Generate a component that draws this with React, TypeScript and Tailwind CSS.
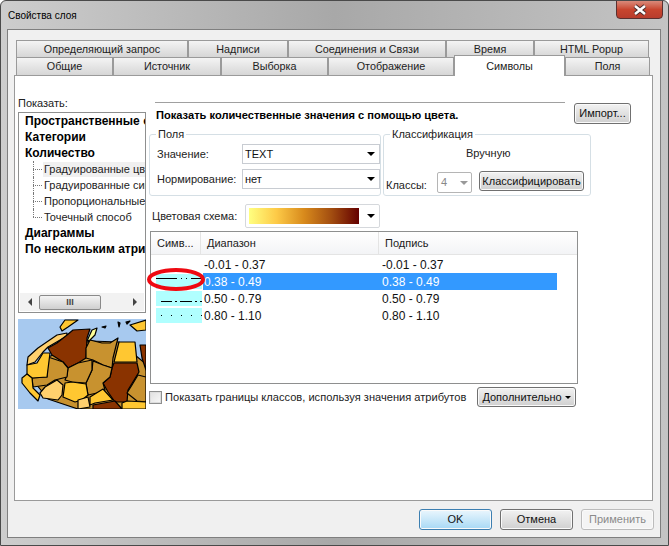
import { ReactNode } from 'react'

const FONT = "font-['Liberation_Sans',Arial,sans-serif]"

const TOP_TABS = [
  { name: 'Определяющий запрос', w: 'w-[172px]' },
  { name: 'Надписи', w: 'w-[100px]' },
  { name: 'Соединения и Связи', w: 'w-[158px]' },
  { name: 'Время', w: 'w-[88px]' },
  { name: 'HTML Popup', w: 'w-[115px]' },
]

const BOTTOM_TABS = [
  { name: 'Общие', w: 'w-[97px]' },
  { name: 'Источник', w: 'w-[108px]' },
  { name: 'Выборка', w: 'w-[107px]' },
  { name: 'Отображение', w: 'w-[126px]' },
]

const TREE = [
  { label: 'Пространственные объекты', bold: true },
  { label: 'Категории', bold: true },
  { label: 'Количество', bold: true },
  { label: 'Градуированные цвета', child: true, selected: true },
  { label: 'Градуированные символы', child: true },
  { label: 'Пропорциональные символы', child: true },
  { label: 'Точечный способ', child: true, last: true },
  { label: 'Диаграммы', bold: true },
  { label: 'По нескольким атрибутам', bold: true },
]

const ROWS = [
  { range: '-0.01 - 0.37', label: '-0.01 - 0.37', dash: '', fill: '', line: '' },
  { range: '0.38 - 0.49', label: '0.38 - 0.49', dash: '21 4 1 4 1 4 11', fill: 'bg-[#b0ffff]', line: 'pt-[4px]', selected: true },
  { range: '0.50 - 0.79', label: '0.50 - 0.79', dash: '0 5 11 3 2 3 12 3 2 3 2', fill: 'bg-[#b0ffff]', line: 'pt-[10px]' },
  { range: '0.80 - 1.10', label: '0.80 - 1.10', dash: '0 5 1 9 1 9 1 9 1 9 1', fill: 'bg-[#b0ffff]', line: 'pt-[7px]' },
]

const BROWN = '#8a3300'
const TAN = '#c8922f'
const YELLOW = '#ffc731'
const PALE = '#ffd06e'

// countries of the little preview, in map pixels
const MAP_SHAPES = [
  { fill: TAN, points: '30,38 72,22 101,23 128,45 128,90 60,90 30,80 14,60' },
  { fill: PALE, points: '10,38 20,29 39,16 49,14 49,17 30,28 25,33 17,43 9,46' },
  { fill: BROWN, points: '30,29 39,24 49,16 55,11 72,10 69,19 68,39 60,44 50,49 45,43 34,36' },
  { fill: TAN, points: '68,39 68,29 72,21 84,24 92,24 100,19 95,39 94,49 85,46 75,41' },
  { fill: YELLOW, points: '101,23 117,23 119,43 96,43' },
  { fill: BROWN, points: '96,44 119,44 121,53 110,71 109,83 97,83 90,73 85,64 92,58 94,49' },
  { fill: BROWN, points: '122,26 128,26 128,51 124,39' },
  { fill: TAN, points: '120,56 128,58 128,83 119,82 109,74 114,66' },
  { fill: TAN, points: '75,42 85,46 94,49 92,58 85,64 87,71 79,74 70,76 68,64 74,51' },
  { fill: TAN, points: '50,49 60,44 74,41 74,51 68,64 54,63 47,61 49,56' },
  { fill: TAN, points: '30,38 45,43 50,49 49,58 37,61 29,66 15,68 14,59 29,58' },
  { fill: YELLOW, points: '9,46 19,44 25,34 32,34 29,58 14,59 9,55' },
  { fill: YELLOW, points: '4,59 9,55 14,59 15,69 22,76 20,82 12,74 4,64' },
  { fill: PALE, points: '27,68 39,61 45,66 44,76 40,81 25,79 22,74' },
  { fill: YELLOW, points: '47,64 54,63 68,65 70,76 64,81 57,83 45,78' },
  { fill: PALE, points: '60,81 70,78 72,88 60,90' },
  { fill: YELLOW, points: '72,78 85,70 95,81 77,84 72,86' },
  { fill: BROWN, points: '75,86 97,82 104,90 75,90' },
  { fill: YELLOW, points: '104,84 109,82 128,83 128,90 104,90' },
  { fill: YELLOW, points: '42,8 47,1 60,1 50,8 44,12' },
  { fill: '#ffff99', points: '69,22 74,11 79,9 77,16 72,21' },
  { fill: YELLOW, points: '112,6 128,1 128,11 119,12' },
  { fill: '#000', points: '84,8 88,7 87,9' },
  { fill: '#000', points: '100,3 102,4 101,8' },
  { fill: '#000', points: '108,3 112,2 109,5' },
]

function Tab({ name, w, h }: { name: string; w: string; h: string }) {
  return (
    <div className={`${w} ${h} shrink-0 flex items-center justify-center border border-b-0 border-[#9a9a9a] bg-gradient-to-b from-[#f4f4f4] to-[#d6d6d6] text-[10.8px] text-[#222] leading-none`}>
      {name}
    </div>
  )
}

function Button({ children, className = '' }: { children: ReactNode; className?: string }) {
  return (
    <div className={`flex items-center justify-center rounded-[3px] border text-[11px] leading-none shadow-[inset_0_0_0_1px_#fafafa] bg-gradient-to-b ${className}`}>
      {children}
    </div>
  )
}

const GRAY_BUTTON = 'border-[#707070] from-[#f2f2f2] to-[#d0d0d0] text-[#111]'

function Caret({ color = 'border-t-black' }: { color?: string }) {
  return <span className={`w-0 h-0 border-x-[4px] border-x-transparent border-t-[4px] ${color}`} />
}

function Combo({ value }: { value: string }) {
  return (
    <div className="w-[138px] h-[20px] flex items-center justify-between pl-[2px] pr-[4px] border border-[#c8ccd2] bg-white text-[11px] text-[#111]">
      <span>{value}</span>
      <Caret />
    </div>
  )
}

function Group({ title, className, children }: { title: string; className: string; children: ReactNode }) {
  return (
    <div className={`relative h-[62px] rounded-[3px] border border-[#d5dfe5] text-[11px] text-[#222] ${className}`}>
      <span className="absolute -top-[8px] left-[6px] bg-white px-[2px] leading-[14px]">{title}</span>
      {children}
    </div>
  )
}

function MapPreview() {
  return (
    <svg width="128" height="90" viewBox="0 0 128 90" className="block shrink-0">
      <rect width="128" height="90" fill="#a7c9ef" />
      <g stroke="#000" strokeWidth="1.2" strokeLinejoin="round">
        {MAP_SHAPES.map((s) => (
          <polygon key={s.points} points={s.points} fill={s.fill} />
        ))}
      </g>
    </svg>
  )
}

function TreeList() {
  return (
    <div className="h-[201px] border border-[#8e8f8f] bg-white flex flex-col">
      <div className="flex-1 overflow-hidden pl-[6px]">
        {TREE.map((t) => (
          <div key={t.label} className="relative h-[16px] flex items-center whitespace-nowrap leading-none">
            {t.child && (
              <>
                <span className={`absolute left-[8px] top-0 border-l border-dotted border-[#777] ${t.last ? 'h-[8px]' : 'h-[16px]'}`} />
                <span className="absolute left-[8px] top-[8px] w-[9px] border-t border-dotted border-[#777]" />
              </>
            )}
            <span className={`${t.child ? 'ml-[18px] pl-px text-[11px] text-[#222]' : 'text-[12px] font-bold text-black'} ${t.selected ? 'bg-[#f0f0f0] w-[103px] py-[2px]' : ''}`}>{t.label}</span>
          </div>
        ))}
      </div>
      <div className="h-[18px] mx-px mb-px flex items-center bg-[#f2f2f2]">
        <div className="w-[19px] flex justify-center"><span className="w-0 h-0 border-y-[4px] border-y-transparent border-r-[4px] border-r-[#444]" /></div>
        <div className="w-[62px] h-[15px] flex items-center justify-center rounded-[2px] border border-[#8a8a8a] bg-gradient-to-b from-[#f4f4f4] to-[#cfcfcf] text-[9px] leading-none text-[#444] font-bold">III</div>
        <div className="flex-1" />
        <div className="w-[18px] flex justify-center"><span className="w-0 h-0 border-y-[4px] border-y-transparent border-l-[4px] border-l-[#444]" /></div>
      </div>
    </div>
  )
}

function SymbolSwatch({ dash, fill, line }: { dash: string; fill: string; line: string }) {
  return (
    <div className={`w-[46px] h-[15px] shrink-0 ${fill} ${line}`}>
      {dash && (
        <svg width="46" height="1" className="block">
          <line x1="0" y1="0.5" x2="46" y2="0.5" stroke="#000" strokeWidth="1" strokeDasharray={dash} />
        </svg>
      )}
    </div>
  )
}

function SymbolTable() {
  return (
    <div className="relative h-[153px] w-[428px] ml-px border border-[#8e8f8f] bg-white">
      <div className="h-[23px] flex items-center border-b border-[#e4e4e4] bg-gradient-to-b from-white to-[#f3f4f6] text-[11px] text-[#222]">
        <div className="w-[49px] pl-[6px]">Симв...</div>
        <div className="w-[178px] h-full flex items-center pl-[6px] border-l border-[#e4e4e4]">Диапазон</div>
        <div className="flex-1 h-full flex items-center pl-[6px] border-l border-[#e4e4e4]">Подпись</div>
      </div>
      <div className="pt-px pl-[5px]">
        {ROWS.map((r) => (
          <div key={r.range} className="h-[17px] flex items-center text-[12px]">
            <SymbolSwatch dash={r.dash} fill={r.fill} line={r.line} />
            <div className={`ml-px w-[354px] h-full flex items-center pl-px ${r.selected ? 'bg-[#3399ff] text-white' : 'text-[#111]'}`}>
              <span className="w-[178px]">{r.range}</span>
              <span>{r.label}</span>
            </div>
          </div>
        ))}
      </div>
      <svg width="60" height="27" viewBox="0 0 60 27" className="absolute left-[-5px] top-[34px]">
        <ellipse cx="30" cy="13.5" rx="27" ry="9.5" fill="none" stroke="#ee0a12" strokeWidth="4" />
      </svg>
    </div>
  )
}

export default function App() {
  return (
    <div className={`${FONT} relative w-[669px] h-[546px] overflow-hidden bg-gradient-to-r from-[#cdcdcd] via-[#a8a8a8] to-[#c4c4c4] flex flex-col pl-[6px] pr-[7px] pb-[7px] rounded-t-[6px] border border-[#4a4a4a]`}>
      <div className="h-[28px] shrink-0 flex items-start justify-between">
        <span className="pt-[8px] pl-px text-[10px] leading-[14px] text-black">Свойства слоя</span>
        <div className="w-[47px] h-[19px] mr-[-2px] mt-[-1px] flex items-center justify-center rounded-b-[4px] border border-[#5a3030] bg-gradient-to-b from-[#d98a7a] via-[#c8452f] to-[#b83c2c]">
          <svg width="16" height="12" viewBox="0 0 16 12">
            <path d="M3 2L13 10M13 2L3 10" stroke="#4a3030" strokeWidth="4.5" />
            <path d="M3 2L13 10M13 2L3 10" stroke="#fff" strokeWidth="2.5" />
          </svg>
        </div>
      </div>

      <div className="flex-1 flex flex-col bg-[#f0f0f0] border border-[#7f7f7f]">
        <div className="pt-[10px] pl-[8px] flex flex-col">
          <div className="flex">
            {TOP_TABS.map((t) => <Tab key={t.name} {...t} h="h-[17px]" />)}
          </div>
          <div className="flex relative">
            {BOTTOM_TABS.map((t) => <Tab key={t.name} {...t} h="h-[18px]" />)}
            <div className="relative z-10 -mt-[2px] w-[111px] h-[21px] -mb-px flex items-start justify-center pt-[5px] border border-b-0 border-[#9a9a9a] bg-white text-[10.8px] leading-none text-[#222]">Символы</div>
            <Tab name="Поля" w="w-[85px]" h="h-[18px]" />
          </div>
        </div>

        <div className="ml-[6px] w-[639px] h-[426px] shrink-0 border border-[#9a9a9a] bg-white flex pl-[3px] pt-[20px] gap-[3px]">
          <div className="w-[128px] shrink-0 flex flex-col">
            <div className="h-[16px] text-[11px] leading-[15px] text-[#222]">Показать:</div>
            <TreeList />
            <div className="mt-[6px]"><MapPreview /></div>
          </div>

          <div className="w-[490px] shrink-0">
            <div className="mt-[6px] flex items-start pl-[6px]">
              <div className="w-[410px] h-[22px] shrink-0 border-t border-[#a0a0a0] pt-[5px] pl-px text-[11.1px] leading-[14px] font-bold text-black whitespace-nowrap">
                Показать количественные значения с помощью цвета.
              </div>
              <Button className={`${GRAY_BUTTON} ml-[9px] w-[57px] h-[21px] mt-px`}>Импорт...</Button>
            </div>

            <div className="mt-[10px] flex gap-[2px]">
              <Group title="Поля" className="w-[232px] pt-[9px] pl-[7px]">
                <div className="flex items-center h-[20px]">
                  <span className="w-[85px]">Значение:</span>
                  <Combo value="TEXT" />
                </div>
                <div className="mt-[5px] flex items-center h-[20px]">
                  <span className="w-[85px]">Нормирование:</span>
                  <Combo value="нет" />
                </div>
              </Group>
              <Group title="Классификация" className="w-[208px]">
                <div className="pt-[11px] pl-[82px] leading-[14px]">Вручную</div>
                <div className="mt-[11px] flex items-start pl-[2px]">
                  <span className="w-[51px] mt-[7px] leading-[14px]">Классы:</span>
                  <div className="w-[35px] h-[21px] mt-px flex items-center justify-between px-[3px] border border-[#b5b5b5] rounded-[2px] text-[#888]">
                    <span>4</span>
                    <Caret color="border-t-[#999]" />
                  </div>
                  <Button className={`${GRAY_BUTTON} ml-[7px] w-[105px] h-[20px]`}>Классифицировать</Button>
                </div>
              </Group>
            </div>

            <div className="mt-[8px] h-[24px] flex items-center pl-[3px] text-[11px] text-[#222]">
              <span className="w-[93px]">Цветовая схема:</span>
              <div className="w-[135px] h-[24px] flex items-center justify-between pl-[3px] pr-[4px] border border-[#d5d8dc] rounded-[2px] bg-white">
                <span className="w-[110px] h-[16px] bg-[linear-gradient(to_right,#ffff80,#fdca47_25%,#d88a1c_50%,#a24d10_75%,#640000)]" />
                <Caret />
              </div>
            </div>

            <div className="mt-[3px]">
              <SymbolTable />
            </div>

            <div className="mt-[3px] h-[20px] flex items-center text-[11px] text-[#222]">
              <span className="w-[13px] h-[13px] shrink-0 border border-[#8e8f8f] bg-gradient-to-br from-[#e0e0e0] to-[#f8f8f8] shadow-[inset_0_0_0_1px_#ddd]" />
              <span className="ml-[3px] w-[312px] shrink-0 whitespace-nowrap text-[11.1px]">Показать границы классов, используя значения атрибутов</span>
              <Button className={`${GRAY_BUTTON} w-[99px] h-[20px] gap-[3px]`}>
                <span><span className="underline">Д</span>ополнительно</span>
                <span className="w-0 h-0 border-x-[3px] border-x-transparent border-t-[3px] border-t-black" />
              </Button>
            </div>
          </div>
        </div>

        <div className="flex justify-end gap-[8px] pr-[6px] pt-[8px]">
          <Button className="w-[73px] h-[21px] border-[#3c7fb1] from-[#eaf6fd] to-[#a7d9f5] text-[#111]">OK</Button>
          <Button className={`${GRAY_BUTTON} w-[73px] h-[21px]`}>Отмена</Button>
          <Button className="w-[73px] h-[21px] border-[#bcbcbc] from-[#f4f4f4] to-[#f4f4f4] text-[#8a8a8a]">Применить</Button>
        </div>
      </div>
    </div>
  )
}
